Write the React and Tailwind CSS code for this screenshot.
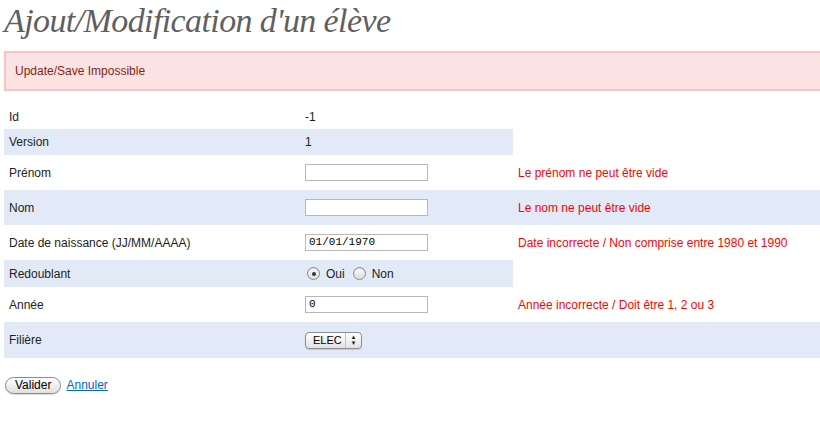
const rows=[
    {label: 'Id', kind: 'text', value: '-1', h: 'h-[25px]', shaded: false, full: false},
    {label: 'Version', kind: 'text', value: '1', h: 'h-[26px]', shaded: true, full: false},
    {label: 'Prénom', kind: 'input', value: '', h: 'h-[35px]', shaded: false, full: true, error: 'Le prénom ne peut être vide'},
    {label: 'Nom', kind: 'input', value: '', h: 'h-[35px]', shaded: true, full: true, error: 'Le nom ne peut être vide'},
    {label: 'Date de naissance (JJ/MM/AAAA)', kind: 'input', value: '01/01/1970', h: 'h-[35px]', shaded: false, full: true, error: 'Date incorrecte / Non comprise entre 1980 et 1990'},
    {label: 'Redoublant', kind: 'radio', h: 'h-[27px]', shaded: true, full: false},
    {label: 'Année', kind: 'input', value: '0', h: 'h-[35px]', shaded: false, full: true, error: 'Année incorrecte / Doit être 1, 2 ou 3'},
    {label: 'Filière', kind: 'select', h: 'h-[36px]', shaded: true, full: true},
];

const Radio=({checked}) => (
    <span className="w-[13px] h-[13px] rounded-full border border-[#8a8a8a] bg-gradient-to-b from-[#ffffff] to-[#dcdcdc] flex items-center justify-center shadow-[inset_0_1px_1px_rgba(0,0,0,0.15)]">
        {checked&&<span className="w-[4px] h-[4px] rounded-full bg-[#333]"></span>}
    </span>
);

const Field=({row}) =>
{
    if (row.kind==='text') return <span>{row.value}</span>;
    if (row.kind==='input') return (
        <div className="w-[123px] h-[17px] border border-[#b8b8b8] bg-white flex items-center pl-[3px] font-['Liberation_Mono',monospace] text-[11px] text-black">
            {row.value}
        </div>
    );
    if (row.kind==='radio') return (
        <div className="flex items-center pl-[2px] text-[12px] text-[#222]">
            <Radio checked />
            <span className="ml-[6px]">Oui</span>
            <span className="ml-[8px]"><Radio /></span>
            <span className="ml-[6px]">Non</span>
        </div>
    );
    return (
        <div className="w-[57px] h-[17px] rounded-[4px] border border-[#8e8e8e] bg-gradient-to-b from-[#ffffff] to-[#e2e2e2] flex items-center shadow-[0_1px_1px_rgba(0,0,0,0.15)]">
            <span className="pl-[7px] w-[39px] text-[11px] text-black">ELEC</span>
            <span className="h-full border-l border-[#c4c4c4] flex-1 flex flex-col items-center justify-center text-[6px] leading-[6px] text-[#222]">
                <span>▲</span>
                <span>▼</span>
            </span>
        </div>
    );
};

const App=() =>
{
    return (
        <div className="w-[820px] h-[424px] overflow-hidden bg-white font-['Liberation_Sans',Arial,sans-serif] text-[12px] text-[#222]">
            {/* Title */}
            <h1 className="pl-[4px] h-[51px] pt-[1px] font-['Liberation_Serif',serif] italic text-[34px] leading-[40px] text-[#5f5f5f] tracking-[-0.6px]">
                Ajout/Modification d'un élève
            </h1>

            {/* Error box */}
            <div className="ml-[4px] w-[840px] h-[40px] border-2 border-[#fbc2c4] bg-[#fbe3e4] text-[#8a1f11] flex items-center pl-[9px]">
                Update/Save Impossible
            </div>

            {/* Form table */}
            <div className="mt-[13px] ml-[4px] flex flex-col">
                {rows.map((row) => (
                    <div key={row.label} className={`flex items-center ${row.h}`}>
                        <div className={`w-[301px] h-full flex items-center pl-[5px] ${row.shaded? 'bg-[#e3eaf7]':''}`}>
                            {row.label}
                        </div>
                        <div className={`w-[208px] h-full flex items-center ${row.shaded? 'bg-[#e3eaf7]':''}`}>
                            <Field row={row} />
                        </div>
                        {row.full&&(
                            <div className={`flex-1 h-full flex items-center pl-[5px] text-[#ff0000] ${row.shaded? 'bg-[#e3eaf7]':''}`}>
                                {row.error}
                            </div>
                        )}
                    </div>
                ))}
            </div>

            {/* Actions */}
            <div className="mt-[18px] ml-[5px] flex items-center gap-[5px]">
                <button className="h-[17px] px-[9px] rounded-full border border-[#8a8a8a] bg-gradient-to-b from-[#ffffff] to-[#e0e0e0] text-[12px] leading-[15px] text-black shadow-[0_1px_1px_rgba(0,0,0,0.15)]">
                    Valider
                </button>
                <a href="#" className="text-[#0066cc] underline">Annuler</a>
            </div>
        </div>
    );
};

export default App;
